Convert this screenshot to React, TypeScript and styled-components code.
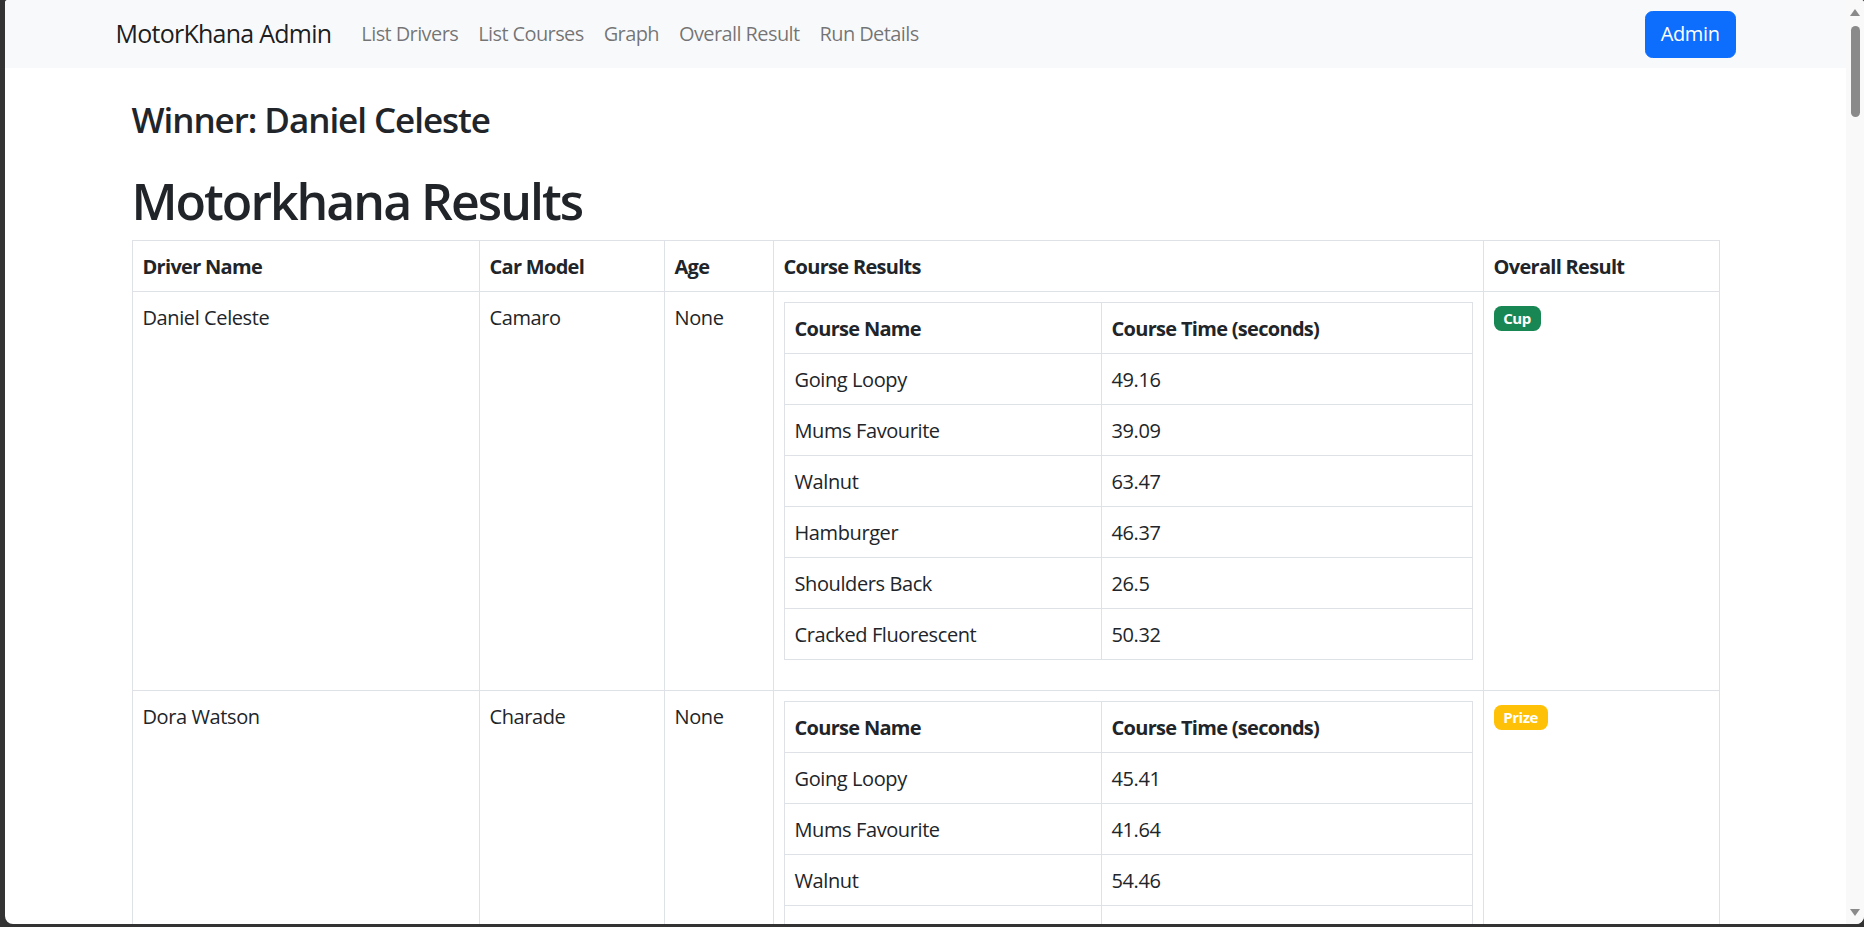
import React from "react";
import styled, { createGlobalStyle } from "styled-components";

const GlobalStyle = createGlobalStyle`
  html, body { margin: 0; padding: 0; background: #333; overflow: hidden; }
  body { font-family: "Open Sans", "Noto Sans", sans-serif; letter-spacing: -0.025em; }
  * { box-sizing: border-box; }
`;

const Frame = styled.div`
  width: 1864px;
  height: 927px;
  background: #333;
  display: flex;
  padding: 0 0 3px 5px;
`;

const Window = styled.div`
  flex: 1;
  display: flex;
  background: #fff;
  border-radius: 3px 3px 8px 8px;
  overflow: hidden;
`;

const Page = styled.div`
  flex: 1;
  min-width: 0;
  overflow: hidden;
  color: #212529;
  font-size: 20px;
  line-height: 30px;
`;

const ScrollTrack = styled.div`
  width: 18px;
  background: #f9f9f9;
  display: flex;
  flex-direction: column;
  align-items: center;
  padding: 9px 0 8px;
`;

const Arrow = styled.div<{ $down?: boolean }>`
  width: 0;
  height: 0;
  border-left: 5px solid transparent;
  border-right: 5px solid transparent;
  ${(p) => (p.$down ? "border-top: 7px solid #8a8a8a;" : "border-bottom: 7px solid #8a8a8a;")}
`;

const Thumb = styled.div`
  width: 9px;
  height: 91px;
  border-radius: 5px;
  background: #8a8a8a;
  margin-top: 10px;
`;

const Spacer = styled.div`
  flex: 1;
`;

const NavBar = styled.nav`
  background: #f8f9fa;
  padding: 9px 0;
`;

const NavContainer = styled.div`
  width: 1650px;
  margin: 0 auto;
  padding: 0 15px;
  display: flex;
  align-items: center;
`;

const Brand = styled.a`
  font-size: 25px;
  line-height: 37.5px;
  padding: 6.25px 0;
  margin-right: 20px;
  letter-spacing: -0.03em;
  color: rgba(0, 0, 0, 0.9);
  text-decoration: none;
`;

const NavList = styled.div`
  display: flex;
  flex: 1;
`;

const NavLink = styled.a`
  padding: 10px;
  line-height: 30px;
  letter-spacing: -0.03em;
  color: rgba(0, 0, 0, 0.55);
  text-decoration: none;
`;

const AdminButton = styled.button`
  background: #0d6efd;
  color: #fff;
  border: 1px solid #0d6efd;
  padding: 7.5px 15px;
  border-radius: 7.5px;
  font-family: inherit;
  letter-spacing: inherit;
  font-size: 20px;
  line-height: 30px;
`;

const Main = styled.main`
  width: 1650px;
  margin: 0 auto;
  padding: 31px 31px 0;
`;

const WinnerTitle = styled.h3`
  font-size: 35px;
  font-weight: 600;
  letter-spacing: -0.03em;
  line-height: 42px;
  margin: 0 0 30px;
`;

const PageTitle = styled.h1`
  font-size: 50px;
  font-weight: 600;
  letter-spacing: -0.04em;
  line-height: 60px;
  margin: 0 0 9px;
`;

const Table = styled.table`
  width: 100%;
  border-collapse: collapse;
  border: 1px solid #dee2e6;
  vertical-align: top;
  margin-bottom: 20px;
  font-size: 20px;
  line-height: 30px;
`;

const HeadCell = styled.th<{ $w?: number }>`
  border: 1px solid #dee2e6;
  padding: 11px 10px 9px;
  text-align: left;
  font-weight: 700;
  letter-spacing: -0.035em;
  ${(p) => (p.$w ? `width: ${p.$w}px;` : "")}
`;

const Cell = styled.td`
  border: 1px solid #dee2e6;
  padding: 11px 10px 9px;
  vertical-align: top;
`;

const NestedCell = styled(Cell)`
  padding: 10px;
`;

const Badge = styled.span<{ $tone: "success" | "warning" }>`
  display: inline-block;
  padding: 5.25px 9.75px;
  font-size: 15px;
  font-weight: 700;
  letter-spacing: -0.03em;
  line-height: 1;
  color: #fff;
  border-radius: 7.5px;
  background: ${(p) => (p.$tone === "success" ? "#198754" : "#ffc107")};
`;

type Run = { course: string; time: string };
type Driver = {
  name: string;
  car: string;
  age: string;
  runs: Run[];
  award: { label: string; tone: "success" | "warning" };
};

const drivers: Driver[] = [
  {
    name: "Daniel Celeste",
    car: "Camaro",
    age: "None",
    runs: [
      { course: "Going Loopy", time: "49.16" },
      { course: "Mums Favourite", time: "39.09" },
      { course: "Walnut", time: "63.47" },
      { course: "Hamburger", time: "46.37" },
      { course: "Shoulders Back", time: "26.5" },
      { course: "Cracked Fluorescent", time: "50.32" },
    ],
    award: { label: "Cup", tone: "success" },
  },
  {
    name: "Dora Watson",
    car: "Charade",
    age: "None",
    runs: [
      { course: "Going Loopy", time: "45.41" },
      { course: "Mums Favourite", time: "41.64" },
      { course: "Walnut", time: "54.46" },
      { course: "Hamburger", time: "50.37" },
      { course: "Shoulders Back", time: "28.14" },
      { course: "Cracked Fluorescent", time: "47.92" },
    ],
    award: { label: "Prize", tone: "warning" },
  },
];

const navItems = ["List Drivers", "List Courses", "Graph", "Overall Result", "Run Details"];

function CourseTable({ runs }: { runs: Run[] }) {
  return (
    <Table>
      <thead>
        <tr>
          <HeadCell $w={317}>Course Name</HeadCell>
          <HeadCell>Course Time (seconds)</HeadCell>
        </tr>
      </thead>
      <tbody>
        {runs.map((r) => (
          <tr key={r.course}>
            <Cell>{r.course}</Cell>
            <Cell>{r.time}</Cell>
          </tr>
        ))}
      </tbody>
    </Table>
  );
}

export default function App() {
  return (
    <>
      <GlobalStyle />
      <Frame>
        <Window>
          <Page>
            <NavBar>
              <NavContainer>
                <Brand href="#">MotorKhana Admin</Brand>
                <NavList>
                  {navItems.map((n) => (
                    <NavLink key={n} href="#">
                      {n}
                    </NavLink>
                  ))}
                </NavList>
                <AdminButton>Admin</AdminButton>
              </NavContainer>
            </NavBar>
            <Main>
              <WinnerTitle>Winner: Daniel Celeste</WinnerTitle>
              <PageTitle>Motorkhana Results</PageTitle>
              <Table>
                <thead>
                  <tr>
                    <HeadCell $w={347}>Driver Name</HeadCell>
                    <HeadCell $w={185}>Car Model</HeadCell>
                    <HeadCell $w={109}>Age</HeadCell>
                    <HeadCell $w={710}>Course Results</HeadCell>
                    <HeadCell>Overall Result</HeadCell>
                  </tr>
                </thead>
                <tbody>
                  {drivers.map((d) => (
                    <tr key={d.name}>
                      <Cell>{d.name}</Cell>
                      <Cell>{d.car}</Cell>
                      <Cell>{d.age}</Cell>
                      <NestedCell>
                        <CourseTable runs={d.runs} />
                      </NestedCell>
                      <NestedCell>
                        <Badge $tone={d.award.tone}>{d.award.label}</Badge>
                      </NestedCell>
                    </tr>
                  ))}
                </tbody>
              </Table>
            </Main>
          </Page>
          <ScrollTrack>
            <Arrow />
            <Thumb />
            <Spacer />
            <Arrow $down />
          </ScrollTrack>
        </Window>
      </Frame>
    </>
  );
}
